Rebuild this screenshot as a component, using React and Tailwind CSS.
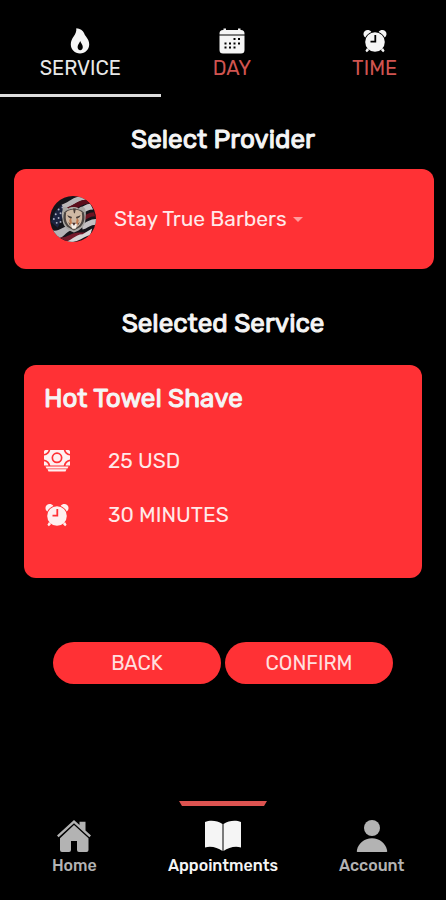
import { useState } from 'react'
import clsx from 'clsx'

function FlameIcon({ className }) {
  return (
    <svg viewBox="0 0 26 26" className={className} fill="currentColor" aria-hidden="true">
      <path
        fillRule="evenodd"
        d="M9.300.300C13 .600 16 2.400 17 5c.5 1.400 1.200 2.500 2 3.600 2 2.600 3.200 5 3.200 7.700 0 5.200-4 9.200-9.200 9.200s-9.200-4-9.200-9.200c0-3.300 1.300-5.500 3-8C8.500 5.800 9.600 3.500 9.300.300ZM13.200 13c-.4 1.800-2.600 3.400-2.600 6 0 1.900 1 3.200 2.600 3.200s2.600-1.300 2.600-3.200c0-2.600-2.200-4.200-2.600-6Z"
      />
    </svg>
  )
}

function CalendarIcon({ className }) {
  return (
    <svg viewBox="0 0 26 26" className={className} fill="currentColor" aria-hidden="true">
      <path d="M4.500.500H7V2h12V.500h2.500V2H22a3.500 3.500 0 0 1 3.500 3.500v1H.5v-1A3.500 3.500 0 0 1 4 2h.5Z" />
      <path
        fillRule="evenodd"
        d="M.5 7.500h25v14.500a3.500 3.500 0 0 1-3.500 3.500H4A3.500 3.500 0 0 1 .5 22ZM14.500 10v2h2v-2Zm4.500 0v2h2v-2ZM5.500 14.500v2h2v-2Zm4.500 0v2h2v-2Zm4.500 0v2h2v-2Zm4.500 0v2h2v-2ZM5.500 18.500v2h2v-2Zm4.500 0v2h2v-2Zm4.500 0v2h2v-2Z"
      />
    </svg>
  )
}

function AlarmIcon({ className }) {
  return (
    <svg viewBox="0 0 26 26" className={className} fill="currentColor" aria-hidden="true">
      <path d="M3.300 9.500C1.200 8 .8 5 2.600 3.200c1.900-1.900 5-1.700 6.800.7C6.700 5 4.600 6.800 3.300 9.500Z" />
      <path d="M22.700 9.500c2.100-1.500 2.500-4.500.7-6.300-1.900-1.900-5-1.700-6.800.7 2.700 1.100 4.800 2.900 6.100 5.600Z" />
      <path d="m5 20 2.200 2-2.300 2.200-1.500-1.400ZM21 20l-2.200 2 2.300 2.200 1.500-1.400Z" />
      <path
        fillRule="evenodd"
        d="M13 4.200a9.800 9.800 0 1 0 0 19.600 9.800 9.800 0 0 0 0-19.600ZM12.400 7h1.800v7.600H8.500v-1.800h3.900Z"
      />
    </svg>
  )
}

function CashIcon({ className }) {
  return (
    <svg viewBox="0 0 26 26" className={className} fill="currentColor" aria-hidden="true">
      <path d="M1.500 2h3C4 4 2.500 5.500 0 6V3.500A1.500 1.500 0 0 1 1.500 2ZM24.500 2h-3c.5 2 2 3.500 4.500 4V3.500A1.500 1.500 0 0 0 24.500 2ZM0 17.500h4.500C4 15.200 2.500 13.700 0 13.200Zm26 0h-4.500c.5-2.300 2-3.800 4.500-4.300Z" />
      <path
        fillRule="evenodd"
        d="M6.300 2h13.400c.6 3 2.800 5 6.300 5.600v4c-3.500.6-5.700 2.900-6.300 5.900H6.300C5.700 14.500 3.500 12.200 0 11.600v-4C3.500 7 5.700 5 6.300 2ZM13 4.300a5.500 5.500 0 1 0 0 11 5.500 5.500 0 0 0 0-11Z"
      />
      <circle cx="13" cy="9.800" r="3.800" />
      <path d="M1.500 18.500h23l-1 2h-21ZM3.500 21.200h19l-1 2.300h-17Z" />
    </svg>
  )
}

function HomeIcon({ className }) {
  return (
    <svg viewBox="0 0 34 32" className={className} fill="currentColor" aria-hidden="true">
      <path d="M17 0 22.500 5V1.800h6v8.700L34 15.600l-1.600 1.700L17 3.200 1.600 17.300 0 15.600Z" />
      <path d="M17 5 31.500 18.200V30a2 2 0 0 1-2 2H22a2 2 0 0 1-2-2v-9h-6v9a2 2 0 0 1-2 2H5a2 2 0 0 1-2-2V18.200Z" />
    </svg>
  )
}

function BookIcon({ className }) {
  return (
    <svg viewBox="0 0 36 32" className={className} fill="currentColor" aria-hidden="true">
      <path d="M0 2C5-.2 12 .2 17.500 4v27C12.500 27.500 6 25.700 0 27.500Z" />
      <path d="M36 2C31-.2 24 .2 18.500 4v27C23.500 27.500 30 25.700 36 27.500Z" />
    </svg>
  )
}

function PersonIcon({ className }) {
  return (
    <svg viewBox="0 0 32 32" className={className} fill="currentColor" aria-hidden="true">
      <circle cx="16" cy="8" r="8" />
      <path d="M1.500 32C.5 32 .8 31 1 30 2.300 23.500 8.200 18.300 16 18.300S29.700 23.500 31 30c.2 1 .5 2-.5 2Z" />
    </svg>
  )
}

// tiger head in front of a waving flag
function ProviderAvatar({ className }) {
  return (
    <svg viewBox="0 0 48 48" className={className} role="img" aria-label="Stay True Barbers logo">
      <clipPath id="avatar">
        <circle cx="24" cy="24" r="24" />
      </clipPath>
      <g clipPath="url(#avatar)">
        <rect width="48" height="48" fill="#15141a" />
        <path d="M12 9C22 6 26-1 34 1l4 3C30 4 24 11 14 14Z" fill="#b9b6b8" />
        <path d="M14 13c9-1 14-9 24-9l3 4c-10 0-16 9-25 10Z" fill="#5b0e1c" />
        <path d="M20 18C30 16 33 9 42 8l3 6c-9 0-13 8-22 9Z" fill="#c8c5c6" />
        <path d="M32 22c5-1 8-5 14-5l1 4c-6 0-9 4-13 5Z" fill="#6c1322" />
        <path d="M33 29c5-1 9-5 15-5v6c-6 0-9 4-14 5Z" fill="#c4c1c3" />
        <path d="M3 36c7 1 10-4 16-5l5 4C16 37 13 46 6 45Z" fill="#b5b3b6" />
        <path d="M10 43c8 1 12-5 20-5l11 0c-9 1-15 9-25 9Z" fill="#74192a" />
        <path d="M14 48c8 0 12-8 20-8l10-6-2 7c-7 1-11 7-20 7Z" fill="#d7d5d6" />
        <path d="M5 17 12 9l4 7-8 17-7-6Z" fill="#1d2440" />
        <g fill="#aeb2c3">
          <circle cx="9" cy="14" r="1" />
          <circle cx="13" cy="12" r="1" />
          <circle cx="6" cy="19" r="1" />
          <circle cx="11" cy="18" r="1" />
          <circle cx="4" cy="24" r="1" />
          <circle cx="9" cy="23" r="1" />
          <circle cx="7" cy="28" r="1" />
          <circle cx="11" cy="27" r="1" />
        </g>
        <path d="M13 15c0-4 4-5 6-2 3-2 8-2 11 0 2-3 7-2 7 2 1 3 0 6 0 9 0 7-5 12-12 14-7-2-12-7-12-14-1-4-1-6 0-9Z" fill="#aaa7a3" />
        <path d="M15 17c4-5 16-5 20 0 2 5 1 11-3 15l-7 4-7-4c-4-4-5-10-3-15Z" fill="#4c4542" />
        <path d="M17 17c3-4 13-4 16 0 1 5 1 10-3 14l-5 4-5-4c-4-4-4-9-3-14Z" fill="#d0b9a4" />
        <path d="M24 13h3l-1 5h-1ZM18 20l5 2-1 2-3-2ZM32 20l-5 2 1 2 3-2ZM19 27l2 2v2ZM31 27l-2 2v2Z" fill="#4a3d38" />
        <path d="m22 23 1 6-2 1-1-5ZM28 23l-1 6 2 1 1-5Z" fill="#c07a50" />
        <path d="M22 29h6l-1 5h-4Z" fill="#f5efe9" />
        <path d="M23 28h4l-2 3Z" fill="#46302e" />
      </g>
    </svg>
  )
}

const steps = [
  { id: 'service', label: 'SERVICE', icon: FlameIcon },
  { id: 'day', label: 'DAY', icon: CalendarIcon },
  { id: 'time', label: 'TIME', icon: AlarmIcon },
]

const details = [
  { label: '25 USD', icon: CashIcon },
  { label: '30 MINUTES', icon: AlarmIcon },
]

const links = [
  { id: 'home', label: 'Home', icon: HomeIcon },
  { id: 'appointments', label: 'Appointments', icon: BookIcon },
  { id: 'account', label: 'Account', icon: PersonIcon },
]

// regular weight thickened by a stroke
const heading = 'text-[26px] leading-9 font-normal [-webkit-text-stroke:1px_currentColor]'

export default function App() {
  const [step, setStep] = useState('service')
  const [provider, setProvider] = useState('Stay True Barbers')
  const current = 'appointments'

  return (
    <div className="flex min-h-screen flex-col bg-black font-['Rubik','Roboto',sans-serif] text-[#f5f5f5]">
      <header role="tablist" className="grid grid-cols-[36fr_32fr_32fr]">
        {steps.map(({ id, label, icon: Icon }) => (
          <button
            key={id}
            type="button"
            role="tab"
            aria-selected={step === id}
            onClick={() => setStep(id)}
            className={clsx(
              'flex flex-col items-center gap-0.5 border-b-3 pt-7 pb-3.5',
              step === id ? 'border-[#dedede]' : 'border-transparent'
            )}
          >
            <Icon className="size-[26px] text-[#f5f5f5]" />
            <span
              className={clsx(
                'text-xl leading-6',
                step === id ? 'text-[#e8e8e8]' : 'text-[#d05450]'
              )}
            >
              {label}
            </span>
          </button>
        ))}
      </header>

      <main className="pt-[25px]">
        <h2 className={clsx(heading, 'text-center')}>
          <label htmlFor="provider">Select Provider</label>
        </h2>

        <section className="mt-[11px] mr-3 ml-3.5 flex items-center rounded-xl bg-[#ff3135] px-9 py-[27px]">
          <ProviderAvatar className="size-[46px] shrink-0" />
          <select
            id="provider"
            value={provider}
            onChange={(e) => setProvider(e.target.value)}
            className="ml-[18px] field-sizing-content appearance-none bg-transparent text-[21px] leading-8 text-[#ffe9e9]"
          >
            <option>Stay True Barbers</option>
          </select>
          <svg viewBox="0 0 10 5" className="ml-1.5 h-[5px] w-2.5 text-[#ff9c9d]" fill="currentColor" aria-hidden="true">
            <path d="M0 0h10L5 5Z" />
          </svg>
        </section>

        <h2 className={clsx(heading, 'mt-[37px] text-center')}>Selected Service</h2>

        <section className="mx-6 mt-[23px] rounded-xl bg-[#ff3135] px-5 pt-4 pb-[47px]">
          <h3 className={heading}>Hot Towel Shave</h3>
          <ul className="mt-7 flex flex-col gap-[22px]">
            {details.map(({ label, icon: Icon }) => (
              <li key={label} className="flex items-center gap-9 text-[21px] leading-8 text-[#ffe9e9]">
                <span className="flex w-7">
                  <Icon className="size-[26px] text-[#fff0f0]" />
                </span>
                {label}
              </li>
            ))}
          </ul>
        </section>

        <div className="mt-16 flex gap-1 px-[53px]">
          <button type="button" className="h-[42px] flex-1 rounded-full bg-[#ff3135] text-xl leading-6 text-[#ffe0e0]">
            BACK
          </button>
          <button type="button" className="h-[42px] flex-1 rounded-full bg-[#ff3135] text-xl leading-6 text-[#ffe0e0]">
            CONFIRM
          </button>
        </div>
      </main>

      <nav className="mt-auto grid grid-cols-3 pb-6">
        {links.map(({ id, label, icon: Icon }) => (
          <a
            key={id}
            href={`#${id}`}
            aria-current={current === id ? 'page' : undefined}
            className={clsx(
              'flex flex-col items-center text-base leading-5 font-medium',
              current === id ? 'text-[#f5f5f5]' : 'text-[#b3b3b3]'
            )}
          >
            <svg
              viewBox="0 0 88 5"
              className={clsx('h-[5px] w-22', current === id ? 'text-[#dd5350]' : 'invisible')}
              fill="currentColor"
              aria-hidden="true"
            >
              <path d="M0 0h88l-3 5H3Z" />
            </svg>
            <Icon className="mt-3.5 mb-1 h-8 w-9" />
            {label}
          </a>
        ))}
      </nav>
    </div>
  )
}
